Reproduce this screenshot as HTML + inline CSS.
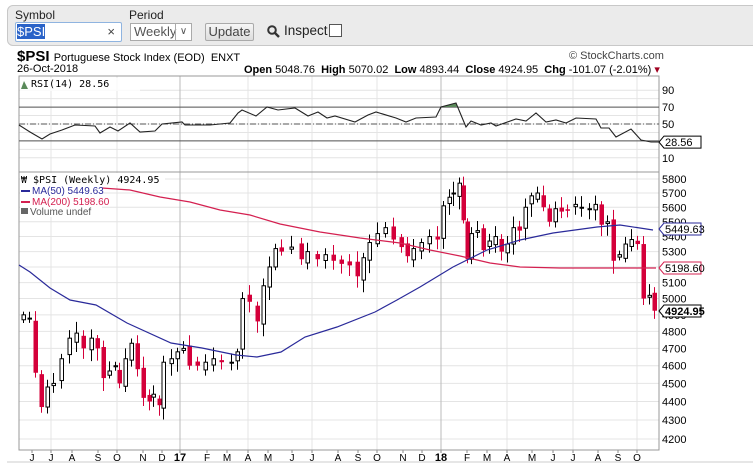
<!DOCTYPE html>
<html><head><meta charset="utf-8"><style>
body{margin:0;width:753px;height:468px;background:#fff;overflow:hidden;font-family:"Liberation Sans",sans-serif;position:relative}
.bar{position:absolute;left:7px;top:5px;width:760px;height:39px;background:#ebebeb;border:1px solid #c8c8c8;border-radius:6px}
.lbl{position:absolute;font-size:12px;color:#222}
.inp{position:absolute;left:15px;top:22px;width:105px;height:18px;border:1px solid #8fb4e0;background:#fff;border-radius:2px}
.sel{position:absolute;left:130px;top:23px;width:60px;height:16px;border:1px solid #aaa;background:#fff;font-size:13px;color:#555}
.btn{position:absolute;left:205px;top:23px;width:47px;height:16px;border:1px solid #aaa;background:linear-gradient(#f6f6f6,#ddd);border-radius:2px;font-size:13px;color:#444;text-align:center;line-height:16px}
svg{position:absolute;left:0;top:0}
</style></head><body>
<div class="bar"></div>
<div class="lbl" style="left:15px;top:8px">Symbol</div>
<div class="lbl" style="left:129px;top:8px">Period</div>
<div class="inp"><span style="position:absolute;left:1px;top:1px;background:#2a63c8;color:#fff;font-size:13px;line-height:15px">$PSI</span><span style="position:absolute;right:6px;top:1px;font-size:13px;color:#444">×</span></div>
<div class="sel"><span style="position:absolute;left:3px;top:0">Weekly</span><span style="position:absolute;right:0;top:0;width:15px;height:16px;border-left:1px solid #aaa;text-align:center;font-size:10px;line-height:16px">&#x2228;</span></div>
<div class="btn">Update</div>
<svg width="14" height="14" style="left:267px;top:25px"><circle cx="5" cy="5" r="3.8" fill="none" stroke="#333" stroke-width="2"/><line x1="8" y1="8" x2="12" y2="12" stroke="#333" stroke-width="2.4"/></svg>
<div style="position:absolute;left:284px;top:23px;font-size:13.5px;color:#222">Inspect</div>
<div style="position:absolute;left:329px;top:24px;width:11px;height:11px;border:1px solid #555;background:#fff"></div>
<div style="position:absolute;left:17px;top:48px;font-size:15px;font-weight:bold">$PSI <span style="font-weight:normal;font-size:11px">Portuguese Stock Index (EOD)&nbsp; ENXT</span></div>
<div style="position:absolute;left:569px;top:50px;font-size:11px;color:#444">© StockCharts.com</div>
<div style="position:absolute;left:17px;top:63px;font-size:11px">26-Oct-2018</div>
<div style="position:absolute;left:244px;top:63px;font-size:11px;white-space:nowrap"><b>Open</b> 5048.76 &nbsp;<b>High</b> 5070.02 &nbsp;<b>Low</b> 4893.44 &nbsp;<b>Close</b> 4924.95 &nbsp;<b>Chg</b> -101.07 (-2.01%) <span style="color:#a00020">▾</span></div>
<svg id="s" width="753" height="468" font-family="Liberation Sans, sans-serif"></svg>
<script>
const s=document.getElementById('s');let h='';
const L=19,R=659,T=76,M=172,B=450;
const yp=p=>179+805.5*Math.log(5800/p);
const yr=v=>124+(50-v)*0.845;
const mx=[32,51,72,98,117,143,162,180,207,227,248,268,292,312,338,358,377,403,422,441,467,487,507,532,553,573,598,618,637];
const ml=['J','J','A','S','O','N','D','17','F','M','A','M','J','J','A','S','O','N','D','18','F','M','A','M','J','J','A','S','O'];
[90,80,70,60,50,40,30,20,10].forEach(v=>{h+=`<line x1="${L}" x2="${R}" y1="${yr(v)}" y2="${yr(v)}" stroke="#e4e4e4"/>`});
for(let p=4200;p<=5800;p+=100){const y=yp(p);h+=`<line x1="${L}" x2="${R}" y1="${y}" y2="${y}" stroke="#e4e4e4"/><text x="662" y="${y+4}" font-size="11">${p}</text>`;}
[51,117,180,248,312,377,441,507,573,637].forEach(x=>{h+=`<line x1="${x}" x2="${x}" y1="${T}" y2="${B}" stroke="${(x==180||x==441)?'#bbb':'#e4e4e4'}"/>`});
mx.forEach((x,i)=>{h+=`<line x1="${x}" x2="${x}" y1="${B}" y2="${B+3}" stroke="#888"/><text x="${x}" y="${B+11}" font-size="${ml[i].length>1?11:10}" ${ml[i].length>1?'font-weight="bold"':''} text-anchor="middle">${ml[i]}</text>`});
h+=`<rect x="${L}" y="${T}" width="${R-L}" height="${B-T}" fill="none" stroke="#999"/><line x1="${L}" x2="${R}" y1="${M}" y2="${M}" stroke="#999"/>`;
[[90,'90'],[70,'70'],[50,'50'],[10,'10']].forEach(a=>{h+=`<text x="662" y="${yr(a[0])+4}" font-size="11">${a[1]}</text>`});
h+=`<line x1="${L}" x2="${R}" y1="${yr(70)}" y2="${yr(70)}" stroke="#555"/><line x1="${L}" x2="${R}" y1="${yr(30)}" y2="${yr(30)}" stroke="#555"/><line x1="${L}" x2="${R}" y1="${yr(50)}" y2="${yr(50)}" stroke="#555" stroke-dasharray="6,2,1,2"/>`;
const rsi=[[19,125],[30,132],[42,139],[50,134],[62,130],[75,125],[95,126],[100,133],[110,127],[118,131],[130,123],[140,132],[155,131],[162,124],[182,122],[185,125],[210,125],[230,123],[238,113],[242,110],[256,116],[267,107],[278,110],[295,108],[308,116],[318,112],[327,118],[335,116],[355,122],[368,115],[376,112],[396,118],[406,122],[416,118],[436,117],[441,107],[456,103],[461,115],[466,127],[471,121],[481,125],[491,123],[496,126],[516,119],[526,121],[536,113],[546,122],[556,120],[566,123],[576,118],[596,119],[601,128],[609,128],[616,137],[631,129],[641,140],[651,142],[659,142]];
h+=`<polygon points="441,107 456,103 457,107" fill="#5a8a5a"/>`;
h+=`<polyline points="${rsi.join(' ')}" fill="none" stroke="#222" stroke-width="1.1"/>`;
const kp=[[22,4900],[28,4880],[34,4560],[40,4370],[46,4480],[52,4500],[60,4640],[68,4760],[75,4790],[82,4700],[90,4760],[96,4700],[102,4530],[108,4570],[114,4600],[118,4500],[124,4640],[130,4730],[136,4580],[142,4420],[148,4400],[152,4440],[158,4380],[162,4620],[170,4640],[176,4680],[182,4700],[188,4600],[196,4600],[204,4620],[212,4640],[220,4620],[230,4620],[236,4680],[241,5000],[248,4980],[256,4860],[262,5080],[268,5200],[274,5320],[280,5300],[290,5330],[300,5250],[306,5300],[316,5250],[324,5280],[332,5240],[340,5220],[348,5210],[356,5140],[362,5260],[368,5360],[376,5420],[384,5460],[392,5380],[400,5330],[406,5270],[412,5320],[420,5360],[428,5400],[436,5380],[442,5610],[448,5670],[452,5700],[458,5770],[462,5510],[466,5250],[470,5420],[476,5440],[482,5310],[488,5370],[494,5400],[500,5300],[506,5350],[512,5460],[518,5440],[524,5600],[530,5680],[536,5700],[542,5600],[548,5500],[554,5590],[560,5570],[566,5580],[574,5620],[580,5600],[588,5590],[594,5620],[600,5480],[606,5500],[612,5240],[618,5280],[624,5350],[630,5380],[636,5350],[642,5000],[648,5020],[653,4925]];
let prev=4870;
kp.forEach((k,i)=>{const x=k[0],c=k[1],o=prev;const up=c>=o;const hi=Math.max(o,c)*(1+0.004+((i*37)%11)/1000),lo=Math.min(o,c)*(1-0.004-((i*53)%13)/1000);
h+=`<line x1="${x+1.5}" x2="${x+1.5}" y1="${yp(hi)}" y2="${yp(lo)}" stroke="${up?'#000':'#d4003a'}"/>`;
const y1=yp(Math.max(o,c)),y2=yp(Math.min(o,c));
h+= up?`<rect x="${x}" y="${y1}" width="3.5" height="${Math.max(1,y2-y1)}" fill="#fff" stroke="#000" stroke-width="1"/>`:`<rect x="${x-0.5}" y="${y1}" width="4.5" height="${Math.max(1.5,y2-y1)}" fill="#d4003a"/>`;
prev=c+((i*29)%7-3)*8;});
const blue=[[19,265],[30,272],[50,288],[70,300],[96,305],[127,323],[171,343],[202,348],[236,355],[257,357],[281,352],[305,337],[337,327],[375,312],[397,300],[420,287],[453,267],[487,250],[520,240],[553,233],[597,227],[620,225],[653,230]];
const red=[[102,188],[130,190],[160,197],[190,202],[220,210],[250,215],[280,224],[320,232],[360,238],[400,243],[430,250],[460,256],[490,263],[520,267],[560,268],[620,268],[656,268]];
h+=`<rect x="20" y="173" width="82" height="44" fill="#fff"/><rect x="20" y="173" width="145" height="12" fill="#fff"/>`;
h+=`<polyline points="${red.join(' ')}" fill="none" stroke="#d42050" stroke-width="1.2"/>`;
h+=`<polyline points="${blue.join(' ')}" fill="none" stroke="#2a2a9a" stroke-width="1.2"/>`;
h+=`<rect x="20" y="78" width="120" height="13" fill="#fff" opacity=".8"/><path d="M21 89 L24 81 L28 89Z" fill="#5a8a5a"/><text x="31" y="87" font-family="DejaVu Sans Mono, monospace" font-size="10">RSI(14) 28.56</text>`;
h+=`<text x="21" y="183" font-family="DejaVu Sans Mono, monospace" font-size="10">₩ $PSI (Weekly) 4924.95</text>`;
h+=`<line x1="21" x2="30" y1="191" y2="191" stroke="#2a2a9a" stroke-width="2"/><text x="32" y="194" font-size="10" fill="#2a2a9a">MA(50) 5449.63</text>`;
h+=`<line x1="21" x2="30" y1="202" y2="202" stroke="#d42050" stroke-width="2"/><text x="32" y="205" font-size="10" fill="#d42050">MA(200) 5198.60</text>`;
h+=`<rect x="21" y="208" width="7" height="6" fill="#666"/><text x="30" y="215" font-size="10" fill="#555">Volume undef</text>`;
function tag(y,t,col,bold){h+=`<path d="M659 ${y} L664 ${y-6} L701 ${y-6} L701 ${y+6} L664 ${y+6}Z" fill="#fff" stroke="${col}"/><text x="665" y="${y+4}" font-size="11" ${bold?'font-weight="bold"':''}>${t}</text>`}
tag(yr(28.56),'28.56','#000');tag(229,'5449.63','#2a2a9a');tag(268,'5198.60','#d42050');tag(311,'4924.95','#000',1);
h+=`<line x1="7" x2="760" y1="462" y2="462" stroke="#ccc"/>`;
s.innerHTML=h;
</script>
</body></html>
